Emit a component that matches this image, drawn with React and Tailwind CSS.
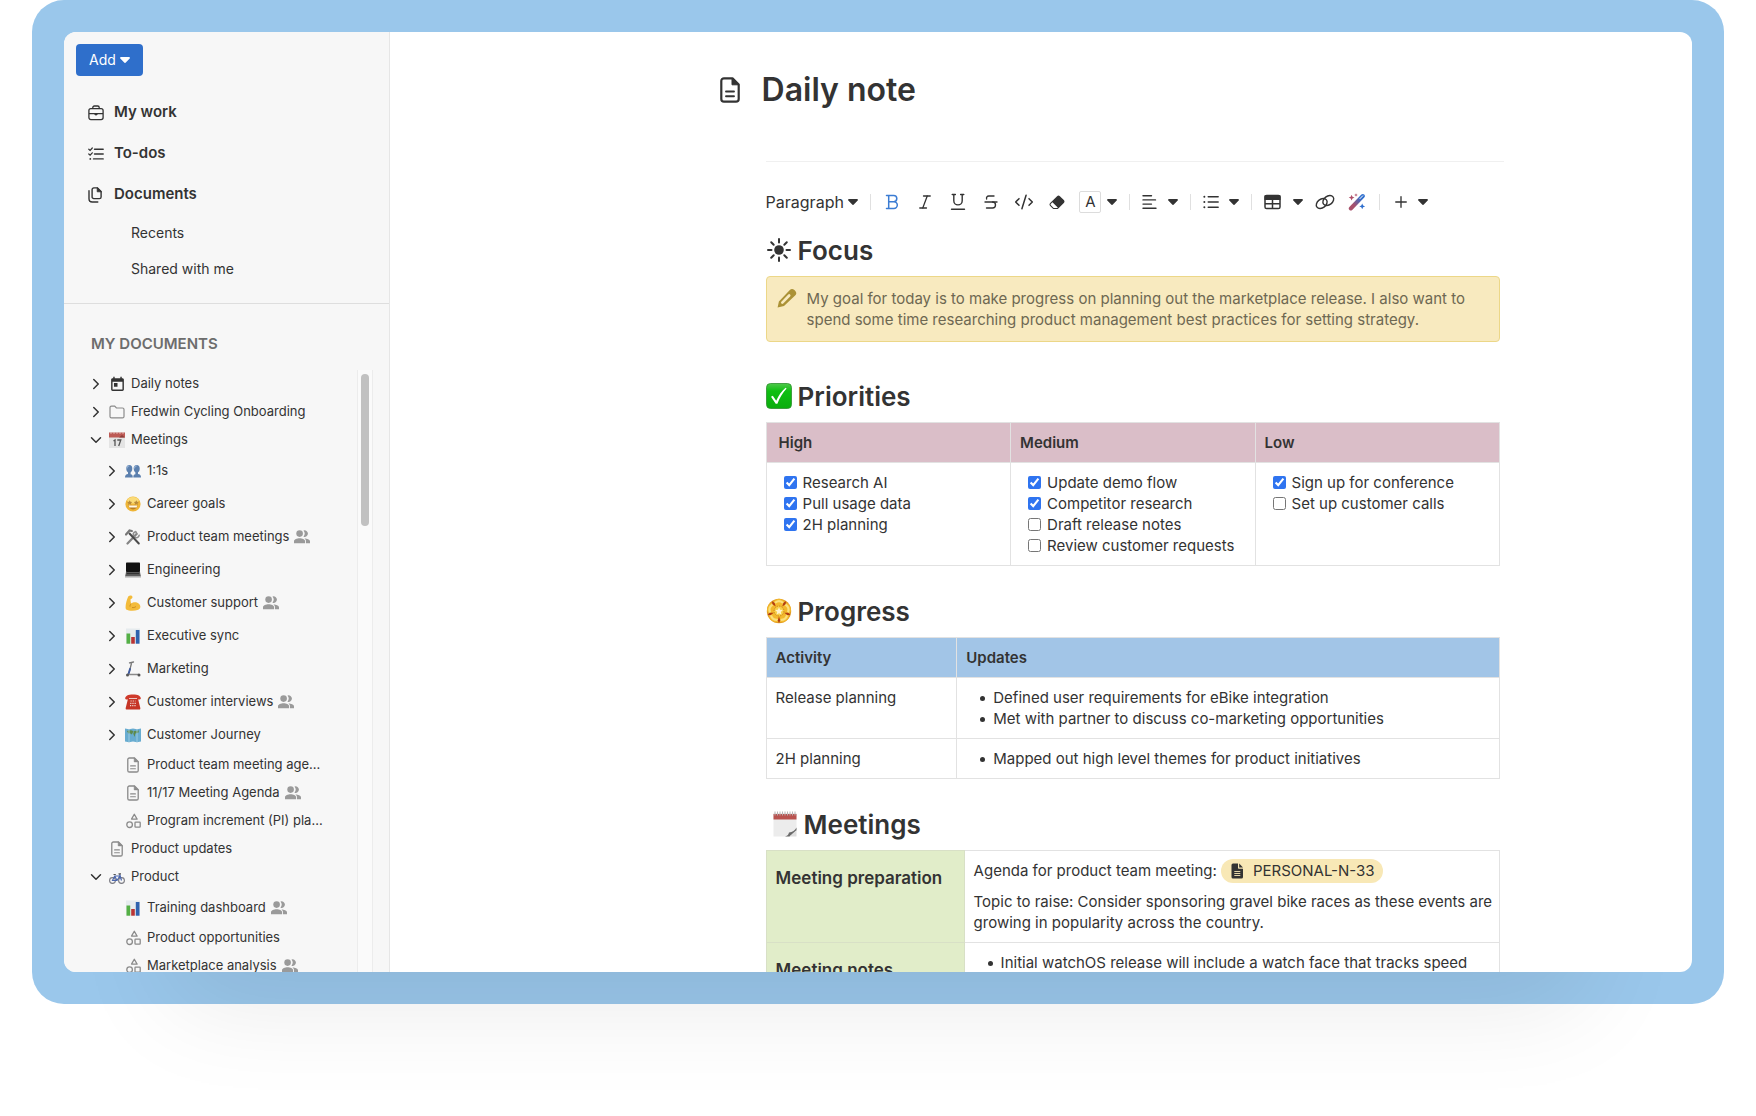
import { useId } from 'react'
import { ChevronDown, ChevronRight, CodeXml, Italic, Plus, Strikethrough } from 'lucide-react'
import { BsEraserFill } from 'react-icons/bs'
import { MdToday } from 'react-icons/md'

function Caret({ className = '' }) {
  return (
    <svg viewBox="0 0 10 6" className={`h-1.5 w-[10px] shrink-0 ${className}`} fill="currentColor" aria-hidden="true">
      <path d="M1 0h8a.9.9 0 0 1 .7 1.5L5.8 5.6a1.1 1.1 0 0 1-1.6 0L.3 1.500A.9.9 0 0 1 1 0z" />
    </svg>
  )
}

function BriefcaseIcon() {
  return (
    <svg viewBox="0 0 16 16" className="size-4" fill="none" stroke="currentColor" strokeWidth="1.3" aria-hidden="true">
      <rect x="0.9" y="3.600" width="14.200" height="11" rx="2" />
      <path d="M4.800 3.600V2.500A1.500 1.500 0 0 1 6.300 1h3.400a1.500 1.500 0 0 1 1.500 1.500v1.100M1 8.600h14" />
      <path d="M6.300 8.600h3.400v.4a1.700 1.400 0 0 1-3.400 0z" fill="currentColor" stroke="none" />
    </svg>
  )
}

function ChecklistIcon() {
  return (
    <svg viewBox="0 0 16 16" className="size-4" fill="none" stroke="currentColor" strokeWidth="1.4" strokeLinecap="round" aria-hidden="true">
      <path d="M6.500 3.200h8.700M6.500 8h8.700M5.500 12.900h9.700" />
      <path d="M.8 3.200l1.300 1.200L4.300 2M.8 8l1.300 1.200L4.300 6.800" strokeWidth="1.200" />
      <circle cx="2.300" cy="12.900" r="0.900" fill="currentColor" stroke="none" />
    </svg>
  )
}

function CopyIcon() {
  return (
    <svg viewBox="0 0 16 16" className="size-4" fill="none" stroke="currentColor" strokeWidth="1.400" strokeLinecap="round" aria-hidden="true">
      <path d="M9.500.9H5.800a1.700 1.700 0 0 0-1.700 1.700v7.300a1.700 1.700 0 0 0 1.700 1.700h5.600a1.700 1.700 0 0 0 1.700-1.700V4.500z" strokeLinejoin="round" />
      <path d="M9.200 1v3.800h3.900z" fill="currentColor" strokeWidth=".8" />
      <path d="M1 3.800v8a3.200 3.200 0 0 0 3.200 3.200h5.600" />
    </svg>
  )
}

function PageIcon({ className = '' }) {
  return (
    <svg viewBox="0 0 20 26" className={className} fill="none" stroke="currentColor" strokeWidth="2.200" strokeLinecap="round" aria-hidden="true">
      <path d="M12.500 1.300H4a2.700 2.700 0 0 0-2.700 2.700v18A2.700 2.700 0 0 0 4 24.700h12a2.700 2.700 0 0 0 2.700-2.700V7.500z" strokeLinejoin="round" />
      <path d="M12 1.500v6.300h6.600z" fill="currentColor" strokeWidth="1" />
      <path d="M6 14.500h8M6 19.200h8" strokeWidth="1.900" />
    </svg>
  )
}

function FolderIcon() {
  return (
    <svg viewBox="0 0 16 16" className="size-4 text-[#8b8b8b]" fill="none" stroke="currentColor" strokeWidth="1.200" aria-hidden="true">
      <path d="M1 3.600c0-.9.600-1.500 1.500-1.500h3.200l1.700 1.900h6.100c.9 0 1.500.6 1.500 1.500v6.900c0 .9-.6 1.500-1.500 1.500h-11c-.9 0-1.500-.6-1.500-1.500z" />
    </svg>
  )
}

function ShapesIcon() {
  return (
    <svg viewBox="0 0 16 16" className="size-4 text-[#8b8b8b]" fill="none" stroke="currentColor" strokeWidth="1.300" strokeLinejoin="round" aria-hidden="true">
      <path d="M9.300 1.200l2.800 4.900H6.500z" />
      <circle cx="4.600" cy="11.700" r="2.800" />
      <rect x="10" y="9.200" width="5.200" height="5" rx=".6" />
    </svg>
  )
}

function SharedIcon() {
  return (
    <svg viewBox="0 0 16 14" className="ml-[5px] h-[14px] w-4 shrink-0 text-[#9a9a9a]" fill="currentColor" role="img" aria-label="Shared">
      <circle cx="5.600" cy="3.600" r="3.300" />
      <path d="M9.500.5a3.300 3.300 0 1 1 0 6.200 5 5 0 0 0 0-6.200z" />
      <path d="M0 13.300v-2.100c0-2 3-3 5.600-3s5.500 1 5.500 3v2.100zM12 13.300v-2.100c0-1.200-.6-2-1.600-2.800 2.700.1 5.600 1 5.600 2.800v2.100z" />
    </svg>
  )
}

function BoldIcon() {
  return (
    <svg viewBox="0 0 14 16" className="h-4 w-[14px] text-[#3b7cd3]" fill="none" stroke="currentColor" strokeWidth="1.500" strokeLinecap="round" strokeLinejoin="round" aria-hidden="true">
      <path d="M1.500 1.500h7.200a3.100 3.100 0 0 1 0 6.200H3.700M8.900 7.700a3.400 3.400 0 0 1 0 6.800H1.500M3.700 1.500v13" />
    </svg>
  )
}

function UnderlineIcon() {
  return (
    <svg viewBox="0 0 16 18" className="h-[18px] w-4" fill="none" stroke="currentColor" strokeWidth="1.400" strokeLinecap="round" aria-hidden="true">
      <path d="M2.200 1.500h3.200M10.600 1.500h3.200M3.800 1.500v6.200a4.200 4.200 0 0 0 8.400 0V1.500M1.500 16.300h13" />
    </svg>
  )
}

function AlignIcon() {
  return (
    <svg viewBox="0 0 16 16" className="size-4" fill="none" stroke="currentColor" strokeWidth="1.400" strokeLinecap="round" aria-hidden="true">
      <path d="M1 1.700h8.500M1 5.900h12.500M1 10.100h8.500M1 14.300h13" />
    </svg>
  )
}

function ListIcon() {
  return (
    <svg viewBox="0 0 16 16" className="size-4" fill="none" stroke="currentColor" strokeWidth="1.400" strokeLinecap="round" aria-hidden="true">
      <path d="M5.200 2.700h10M5.200 8h10M5.200 13.300h10" />
      <path d="M1.300 2.700h.1M1.300 8h.1M1.300 13.300h.1" strokeWidth="1.900" />
    </svg>
  )
}

function TableIcon() {
  return (
    <svg viewBox="0 0 17 16" className="h-4 w-[17px]" fill="none" stroke="currentColor" strokeWidth="1.500" aria-hidden="true">
      <rect x="1" y="1.500" width="15" height="13" rx="1.600" />
      <path d="M1.200 2.200h14.600v3H1.200z" fill="currentColor" />
      <path d="M1 9.800h15M8.500 5v9.500" />
    </svg>
  )
}

function LinkIcon() {
  return (
    <svg viewBox="0 0 20 16" className="h-4 w-5" fill="none" stroke="currentColor" strokeWidth="1.400" aria-hidden="true">
      <ellipse cx="6.700" cy="9.500" rx="6" ry="4.300" transform="rotate(-38 6.700 9.500)" />
      <ellipse cx="13.300" cy="6.500" rx="6" ry="4.300" transform="rotate(-38 13.300 6.500)" />
    </svg>
  )
}

function WandIcon() {
  const id = useId()
  return (
    <svg viewBox="0 0 18 18" className="size-[18px]" aria-hidden="true">
      <defs>
        <linearGradient id={id} x1="0" y1="1" x2="1" y2="0">
          <stop offset="0.250" stopColor="#a8506b" />
          <stop offset="0.850" stopColor="#2f6fce" />
        </linearGradient>
      </defs>
      <path d="M2.800 15.500L14.800 3" stroke={`url(#${id})`} strokeWidth="4" strokeLinecap="round" />
      <path d="M12 5.600l2.700-2.800" stroke="#fff" strokeWidth="1" strokeLinecap="round" />
      <path d="M3.600 1.700l.9 2 2 .9-2 .9-.9 2-.9-2-2-.9 2-.9zM8 .2l.5 1.300 1.300.5-1.300.5L8 3.800l-.5-1.300L6.200 2l1.300-.5z" fill="#b0506a" />
      <path d="M14.200 10.500l.9 2 2 .9-2 .9-.9 2-.9-2-2-.9 2-.9z" fill="#2f6fce" />
    </svg>
  )
}

function SunIcon() {
  const rays = [0, 45, 90, 135, 180, 225, 270, 315]
  return (
    <svg viewBox="0 0 26 26" className="size-[26px]" fill="currentColor" aria-hidden="true">
      <circle cx="13" cy="13" r="4.800" />
      {rays.map((angle) => (
        <path key={angle} d="M13 5.500V2" stroke="currentColor" strokeWidth="2" strokeLinecap="round" transform={`rotate(${angle} 13 13)`} />
      ))}
    </svg>
  )
}

function PencilIcon() {
  return (
    <svg viewBox="0 0 20 20" className="size-5 shrink-0 text-[#ab9236]" aria-hidden="true">
      <path d="M.6 19.400l1.300-6L12.600 2.200a3.300 3.300 0 0 1 4.800-.1l.7.7a3.300 3.300 0 0 1 0 4.700L7 18.100z" fill="currentColor" />
      <path d="M5.300 14.600l6.900-7.100" stroke="#f8eabf" strokeWidth="2.600" strokeLinecap="round" />
    </svg>
  )
}

function CalendarEmoji() {
  return (
    <svg viewBox="0 0 16 16" className="size-4" aria-hidden="true">
      <rect x="0" y="0.500" width="16" height="15.500" fill="#e4e4e4" />
      <rect x="0" y="0.500" width="16" height="5" fill="#bd5a55" />
      <path d="M2 0v2M5 0v2M8 0v2M11 0v2M14 0v2" stroke="#e8c9c6" strokeWidth="0.800" />
      <path d="M10 5.500L13 3l3 2.500z" fill="#8d3f3b" />
      <path d="M4.500 9l1.500-1v6M8.300 8h3.500L9.700 14" fill="none" stroke="#555" strokeWidth="1.300" />
    </svg>
  )
}

function BustsEmoji() {
  return (
    <svg viewBox="0 0 16 16" className="size-4" aria-hidden="true">
      <g fill="#5c80ae">
        <ellipse cx="4.300" cy="5.800" rx="3" ry="3.700" />
        <ellipse cx="11.700" cy="5.800" rx="3" ry="3.700" />
        <path d="M3 9h2.600v2.200c1.500.3 2.200.9 2.200 3.300H0c0-2.400 1-3 3-3.400zM10.400 9H13v2.100c2 .4 3 1 3 3.400H8.300c0-2.400.6-3 2.100-3.300z" />
      </g>
      <path d="M2 5.500c0-1.800 1-2.700 2.300-2.700M9.400 5.500c0-1.800 1-2.700 2.300-2.700" stroke="#8eabcf" strokeWidth="1.200" fill="none" />
    </svg>
  )
}

function StarStruckEmoji() {
  return (
    <svg viewBox="0 0 16 16" className="size-4" aria-hidden="true">
      <circle cx="8" cy="8" r="7.600" fill="#efb537" />
      <ellipse cx="8" cy="4.300" rx="5.700" ry="3.300" fill="#fadb78" />
      <path d="M3.600 9.600h8.800c0 2.400-1.900 3.800-4.400 3.800s-4.400-1.400-4.400-3.800z" fill="#b97d25" />
      <path d="M3.800 9.500h8.400l-.5 2H4.300z" fill="#fff8e6" />
      <path d="M4.700 4.200l.8 1.500 1.700.3L6 7.200l.3 1.700-1.600-.8-1.600.8.3-1.700L2.200 6l1.700-.3zM11.300 4.200l.8 1.500 1.700.3-1.200 1.200.3 1.700-1.600-.8-1.600.8.300-1.700L8.800 6l1.700-.3z" fill="#b98a3a" />
    </svg>
  )
}

function ToolsEmoji() {
  return (
    <svg viewBox="0 0 16 16" className="size-4" fill="none" strokeLinecap="round" aria-hidden="true">
      <path d="M2.500 14.500L11.500 5" stroke="#858585" strokeWidth="2.200" />
      <path d="M10.500 2.800a3 3 0 1 0 3.700 3.400M10.800 2.500l1.200 2.300" stroke="#909090" strokeWidth="1.500" />
      <path d="M4.500 4.500l9.300 10" stroke="#4b4b4b" strokeWidth="2" />
      <path d="M1 5.500l3.500-4 2.300.5" stroke="#777" strokeWidth="2.200" />
    </svg>
  )
}

function LaptopEmoji() {
  return (
    <svg viewBox="0 0 16 16" className="size-4" aria-hidden="true">
      <rect x="1" y="0.500" width="14" height="9.500" rx="0.700" fill="#111" />
      <path d="M1 10h14l1 5H0z" fill="#5c5c5c" />
      <path d="M0 14.300h16V16H0z" fill="#cfcfcf" />
      <path d="M1.800 11.500h12.400" stroke="#333" strokeWidth="1.200" />
    </svg>
  )
}

function MuscleEmoji() {
  return (
    <svg viewBox="0 0 16 16" className="size-4" aria-hidden="true">
      <path d="M3.200 1.500C4.500.3 6.800.3 7.300 1.500c.5 1.100-.2 2.300-1.600 2.600-.3 1.800 0 3.200.6 4.600 1.500-1.700 5-2 7.300-.2 2.300 1.900 2.500 5-.3 6.200-3.800 1.500-9.300 1.400-12.100-.2C-.2 13.300.9 6.500 3.200 1.500z" fill="#f3bb3a" />
      <path d="M6.300 8.700c-.9.700-1.400 1.600-1.300 2.900M11 11.500c-1.200 1-2.500 1.300-4 1" stroke="#c98a1e" strokeWidth="0.900" fill="none" />
    </svg>
  )
}

function ChartEmoji() {
  return (
    <svg viewBox="0 0 16 16" className="size-4" aria-hidden="true">
      <rect x="1" y="0.500" width="14" height="15.200" fill="#e6ebee" />
      <rect x="1.500" y="5.500" width="3.700" height="10.200" fill="#54b045" />
      <rect x="6.200" y="9" width="3.600" height="6.700" fill="#b93434" />
      <rect x="10.800" y="2" width="3.700" height="13.700" fill="#2e62ae" />
    </svg>
  )
}

function ScooterEmoji() {
  return (
    <svg viewBox="0 0 16 16" className="size-4" fill="none" strokeLinecap="round" aria-hidden="true">
      <path d="M4.500 1.800L8.500 1M6.700 1.500L4 12" stroke="#777" strokeWidth="1.300" />
      <path d="M5 8L3.500 13" stroke="#3d5aa0" strokeWidth="1.900" />
      <path d="M3.500 13.500h10" stroke="#8a8a8a" strokeWidth="1.500" />
      <circle cx="2.500" cy="14" r="1.500" fill="#555" />
      <circle cx="14" cy="14" r="1.500" fill="#555" />
    </svg>
  )
}

function PhoneEmoji() {
  return (
    <svg viewBox="0 0 16 16" className="size-4" aria-hidden="true">
      <path d="M.2 4.800C0 1.800 3 .4 8 .4s8 1.400 7.800 4.400c0 1-3.600 1-3.800 0V4H4v.8c-.2 1-3.800 1-3.800 0z" fill="#cf3a2b" />
      <path d="M3 4.700h10L15.300 14c.2 1-.3 1.600-1.200 1.600H1.900c-.9 0-1.400-.6-1.200-1.600z" fill="#c63526" />
      <path d="M5.500 7h5M5.200 9.300h5.600M5 11.600h6" stroke="#f0d9d2" strokeWidth="1.200" strokeDasharray="1.200 1" />
    </svg>
  )
}

function MapEmoji() {
  return (
    <svg viewBox="0 0 16 16" className="size-4" aria-hidden="true">
      <path d="M0 1.500l4 .8 4-.8 4 .8 4-.8v13l-4 .8-4-.8-4 .8-4-.8z" fill="#68acd0" />
      <path d="M2 4c2-1 5-.8 6.500.2L6.800 7.500 5 6.300 3.300 6.500zM9 4l5-.5-.6 2.300-3 .6-.9 3.500-1.200-3.200z" fill="#5e8a4c" />
      <path d="M4 2.300v13M12 2.300v13" stroke="#a9d3e6" strokeWidth="0.800" />
    </svg>
  )
}

function BikeEmoji() {
  return (
    <svg viewBox="0 0 16 16" className="size-4" fill="none" aria-hidden="true">
      <circle cx="3.500" cy="11.500" r="2.900" stroke="#7b7b82" strokeWidth="1.100" />
      <circle cx="12.500" cy="11.500" r="2.900" stroke="#7b7b82" strokeWidth="1.100" />
      <path d="M3.500 11.500L5.700 7h5.200L8 11.500zM5.700 7L8 11.500M12.500 11.500L10.600 5" stroke="#4d68ae" strokeWidth="1.200" />
      <path d="M4.500 5.500h2.300M9.500 4.800h2.500" stroke="#555" strokeWidth="1.200" />
    </svg>
  )
}

function CheckEmoji() {
  const id = useId()
  return (
    <svg viewBox="0 0 26 26" className="size-[26px]" aria-hidden="true">
      <defs>
        <linearGradient id={id} x1="0" y1="0" x2="0" y2="1">
          <stop offset="0" stopColor="#4fc84b" />
          <stop offset="0.300" stopColor="#0fbf12" />
          <stop offset="1" stopColor="#0aad0d" />
        </linearGradient>
      </defs>
      <rect x="0.500" y="0.500" width="25" height="25" rx="4" fill={`url(#${id})`} stroke="#2c8f2c" strokeWidth="0.800" />
      <path d="M5 13.800l1.800-1 3.400 4.900C12.600 12.300 15.500 8 19.600 4.700l1 .8c-4.200 4.700-7 9.500-9.200 15.300H9.700z" fill="#fff" />
    </svg>
  )
}

function RosetteEmoji() {
  const petals = [0, 72, 144, 216, 288]
  return (
    <svg viewBox="0 0 26 26" className="size-[26px]" aria-hidden="true">
      <circle cx="13" cy="13" r="12.200" fill="#e09a22" />
      {petals.map((angle) => (
        <g key={angle} transform={`rotate(${angle} 13 13)`}>
          <ellipse cx="13" cy="6.200" rx="6.300" ry="5.400" fill="#f3b82c" />
          <path d="M9.300 4.600q3.700-2.800 7.400 0" stroke="#fbe07a" strokeWidth="2.200" fill="none" strokeLinecap="round" />
        </g>
      ))}
      {petals.map((angle) => (
        <path key={angle} d="M13 25l-1.300-2.600L13 18.500l1.300 3.900z" fill="#b03a12" transform={`rotate(${angle} 13 13)`} />
      ))}
      <circle cx="13" cy="13" r="4.900" fill="#f6cf48" stroke="#cf861c" strokeWidth="1" strokeDasharray="1.500 1" />
      <path d="M13 9.300l1.100 2.500 2.700.3-2 1.800.6 2.700-2.400-1.400-2.400 1.400.6-2.700-2-1.800 2.700-.3z" fill="#fff3cf" />
    </svg>
  )
}

function NotepadEmoji() {
  return (
    <svg viewBox="0 0 26 26" className="size-[26px]" aria-hidden="true">
      <path d="M1.500 2h23v17l-7 6.500h-16z" fill="#ececec" />
      <rect x="1.500" y="3" width="23" height="5.500" fill="#b9524f" />
      <path d="M3 .5v4M5.500.5v4M8 .5v4M10.500.5v4M13 .5v4M15.500.5v4M18 .5v4M20.500.5v4M23 .5v4" stroke="#b8b3b3" strokeWidth="1" />
      <path d="M24.500 16.500v3l-7 6h-4.500c3-1 3.500-2 4-4 3.500-.5 6-2 7.500-5z" fill="#6a6a6a" />
      <path d="M18.500 24.500l6-5.500v6.500h-7z" fill="#dedede" />
    </svg>
  )
}

const pageIcon = <PageIcon className="h-4 w-3 text-[#8b8b8b]" />

const tree = [
  { label: 'Daily notes', icon: <MdToday className="size-[17px] shrink-0" />, state: 'closed' },
  { label: 'Fredwin Cycling Onboarding', icon: <FolderIcon />, state: 'closed' },
  {
    label: 'Meetings',
    icon: <CalendarEmoji />,
    state: 'open',
    children: [
      { label: '1:1s', icon: <BustsEmoji />, state: 'closed', tall: true },
      { label: 'Career goals', icon: <StarStruckEmoji />, state: 'closed', tall: true },
      { label: 'Product team meetings', icon: <ToolsEmoji />, state: 'closed', tall: true, shared: true },
      { label: 'Engineering', icon: <LaptopEmoji />, state: 'closed', tall: true },
      { label: 'Customer support', icon: <MuscleEmoji />, state: 'closed', tall: true, shared: true },
      { label: 'Executive sync', icon: <ChartEmoji />, state: 'closed', tall: true },
      { label: 'Marketing', icon: <ScooterEmoji />, state: 'closed', tall: true },
      { label: 'Customer interviews', icon: <PhoneEmoji />, state: 'closed', tall: true, shared: true },
      { label: 'Customer Journey', icon: <MapEmoji />, state: 'closed', tall: true },
      { label: 'Product team meeting age...', icon: pageIcon },
      { label: '11/17 Meeting Agenda', icon: pageIcon, shared: true },
      { label: 'Program increment (PI) pla...', icon: <ShapesIcon /> },
    ],
  },
  { label: 'Product updates', icon: pageIcon },
  {
    label: 'Product',
    icon: <BikeEmoji />,
    state: 'open',
    children: [
      { label: 'Training dashboard', icon: <ChartEmoji />, tall: true, shared: true },
      { label: 'Product opportunities', icon: <ShapesIcon /> },
      { label: 'Marketplace analysis', icon: <ShapesIcon />, shared: true },
    ],
  },
]

const priorities = [
  {
    level: 'High',
    tasks: [
      { text: 'Research AI', done: true },
      { text: 'Pull usage data', done: true },
      { text: '2H planning', done: true },
    ],
  },
  {
    level: 'Medium',
    tasks: [
      { text: 'Update demo flow', done: true },
      { text: 'Competitor research', done: true },
      { text: 'Draft release notes', done: false },
      { text: 'Review customer requests', done: false },
    ],
  },
  {
    level: 'Low',
    tasks: [
      { text: 'Sign up for conference', done: true },
      { text: 'Set up customer calls', done: false },
    ],
  },
]

const progress = [
  {
    activity: 'Release planning',
    updates: ['Defined user requirements for eBike integration', 'Met with partner to discuss co-marketing opportunities'],
  },
  { activity: '2H planning', updates: ['Mapped out high level themes for product initiatives'] },
]

function TreeItem({ item, nested = false }) {
  const Chevron = item.state === 'open' ? ChevronDown : ChevronRight

  return (
    <li>
      <div className={`flex items-center ${item.tall ? 'h-[33px]' : 'h-7'} ${nested ? 'pl-10' : 'pl-6'}`}>
        <span className="flex w-4 shrink-0 justify-center">
          {item.state ? (
            <button type="button" aria-label={`Toggle ${item.label}`} aria-expanded={item.state === 'open'}>
              <Chevron className="size-[18px]" strokeWidth={2} />
            </button>
          ) : null}
        </span>
        <a href="#" className="ml-[5px] flex items-center whitespace-nowrap">
          <span className="mr-1.5 flex w-4 shrink-0 justify-center">{item.icon}</span>
          {item.label}
          {item.shared ? <SharedIcon /> : null}
        </a>
      </div>
      {item.children ? (
        <ul>
          {item.children.map((child) => <TreeItem key={child.label} item={child} nested />)}
        </ul>
      ) : null}
    </li>
  )
}

function NavLink({ icon, children }) {
  return (
    <a href="#" className="flex h-[41px] items-center gap-[10px] px-3 text-[15px] font-semibold">
      {icon}
      {children}
    </a>
  )
}

function Sidebar() {
  return (
    <aside className="flex w-[326px] shrink-0 flex-col border-r border-[#e6e6e6] bg-[#f7f7f7]">
      <div className="border-b border-[#dedede] px-3 pt-3 pb-4">
        <button type="button" className="flex h-8 items-center gap-1 rounded bg-[#2f6fcb] px-[13px] text-sm text-white">
          Add
          <Caret className="w-[9px]" />
        </button>
        <nav className="mt-4">
          <NavLink icon={<BriefcaseIcon />}>My work</NavLink>
          <NavLink icon={<ChecklistIcon />}>To-dos</NavLink>
          <NavLink icon={<CopyIcon />}>Documents</NavLink>
          <a href="#" className="flex h-9 items-center pl-[55px] text-sm">Recents</a>
          <a href="#" className="flex h-9 items-center pl-[55px] text-sm">Shared with me</a>
        </nav>
      </div>
      <h2 className="px-[27px] pt-[30px] pb-4 text-[15px] leading-5 font-semibold text-[#6d6d6d]">MY DOCUMENTS</h2>
      <div className="flex min-h-0 flex-1 pr-4">
        <ul className="min-w-0 flex-1 overflow-hidden text-[13px]">
          {tree.map((item) => <TreeItem key={item.label} item={item} />)}
        </ul>
        <div className="w-4 border-x border-[#ececec] bg-[#fafafa] px-[3px] pt-1">
          <div className="h-[152px] rounded-full bg-[#c1c1c1]" />
        </div>
      </div>
    </aside>
  )
}

function ToolButton({ label, className = 'w-[33px]', children }) {
  return (
    <button type="button" aria-label={label} className={`flex h-8 shrink-0 items-center justify-center ${className}`}>
      {children}
    </button>
  )
}

function Separator() {
  return <span className="mx-3 h-4 w-px shrink-0 bg-[#e0e0e0]" />
}

function Toolbar() {
  return (
    <div role="toolbar" className="mt-6 flex h-8 items-center">
      <button type="button" className="flex items-center gap-1 text-base">
        Paragraph
        <Caret />
      </button>
      <span className="mr-[5px] ml-3 h-4 w-px shrink-0 bg-[#e0e0e0]" />
      <ToolButton label="Bold"><BoldIcon /></ToolButton>
      <ToolButton label="Italic"><Italic className="size-[18px]" strokeWidth={1.7} /></ToolButton>
      <ToolButton label="Underline"><UnderlineIcon /></ToolButton>
      <ToolButton label="Strikethrough"><Strikethrough className="size-[18px]" strokeWidth={1.8} /></ToolButton>
      <ToolButton label="Code"><CodeXml className="size-5" strokeWidth={1.8} /></ToolButton>
      <ToolButton label="Clear formatting"><BsEraserFill className="size-4" /></ToolButton>
      <ToolButton label="Text color">
        <span className="flex size-[22px] items-center justify-center rounded-xs border border-[#dcdcdc] text-[15px]">A</span>
      </ToolButton>
      <ToolButton label="Text color options" className="w-[10px]"><Caret /></ToolButton>
      <Separator />
      <ToolButton label="Align" className="gap-[10px]"><AlignIcon /><Caret /></ToolButton>
      <Separator />
      <ToolButton label="List" className="gap-[10px]"><ListIcon /><Caret /></ToolButton>
      <Separator />
      <ToolButton label="Table" className="gap-3"><TableIcon /><Caret /></ToolButton>
      <ToolButton label="Link" className="ml-3 w-5"><LinkIcon /></ToolButton>
      <ToolButton label="Assistant" className="ml-3 w-5"><WandIcon /></ToolButton>
      <Separator />
      <ToolButton label="Insert" className="gap-2"><Plus className="size-[18px]" strokeWidth={1.8} /><Caret /></ToolButton>
    </div>
  )
}

function Heading({ icon, children }) {
  return (
    <h2 className="mb-[10px] flex h-8 items-center gap-1.5 text-[26px] font-semibold">
      {icon}
      {children}
    </h2>
  )
}

function BulletList({ items }) {
  return (
    <ul className="pl-[14px]">
      {items.map((item) => (
        <li key={item} className="flex gap-2">
          <span className="mt-[9px] size-[5px] shrink-0 rounded-full bg-current" />
          {item}
        </li>
      ))}
    </ul>
  )
}

const tableClass = 'w-full table-fixed border-collapse border border-[#e2e2e2] text-left leading-[21px]'
const cellClass = 'border border-[#e2e2e2] py-[9px] pr-1 pl-[9px] align-top'

function PrioritiesTable() {
  return (
    <table className={tableClass}>
      <thead>
        <tr className="bg-[#dabec8]">
          {priorities.map((column) => (
            <th key={column.level} className="border border-[#e2e2e2] p-[9px] font-semibold first:pl-3">{column.level}</th>
          ))}
        </tr>
      </thead>
      <tbody>
        <tr>
          {priorities.map((column) => (
            <td key={column.level} className={cellClass}>
              <ul className="pl-2">
                {column.tasks.map((task) => (
                  <li key={task.text}>
                    <label className="flex items-center gap-1.5">
                      <input type="checkbox" defaultChecked={task.done} className="size-[13px] accent-[#2f74f0]" />
                      {task.text}
                    </label>
                  </li>
                ))}
              </ul>
            </td>
          ))}
        </tr>
      </tbody>
    </table>
  )
}

function ProgressTable() {
  return (
    <table className={tableClass}>
      <thead>
        <tr className="bg-[#a2c5e7]">
          <th className={`w-[26%] font-semibold ${cellClass}`}>Activity</th>
          <th className={`font-semibold ${cellClass}`}>Updates</th>
        </tr>
      </thead>
      <tbody>
        {progress.map((row) => (
          <tr key={row.activity}>
            <td className={cellClass}>{row.activity}</td>
            <td className={cellClass}>
              <BulletList items={row.updates} />
            </td>
          </tr>
        ))}
      </tbody>
    </table>
  )
}

function MeetingsTable() {
  const rowHeadClass = 'w-[27%] border border-[#d8e0c6] bg-[#e1edc9] pt-4 pl-[9px] align-top text-[17px] leading-[22px] font-semibold'

  return (
    <table className={tableClass}>
      <tbody>
        <tr>
          <th scope="row" className={rowHeadClass}>Meeting preparation</th>
          <td className={cellClass}>
            <p className="mb-[10px] flex h-[21px] items-center gap-1">
              Agenda for product team meeting:
              <a href="#" className="flex h-6 items-center gap-2 rounded-full bg-[#f8e8b6] px-2">
                <svg viewBox="0 0 16 16" className="size-4" fill="currentColor" aria-hidden="true">
                  <path d="M4 .5h5v4.200c0 .6.400 1 1 1h4V14a1.500 1.500 0 0 1-1.500 1.500H4A1.500 1.500 0 0 1 2.500 14V2A1.500 1.500 0 0 1 4 .5z" />
                  <path d="M10.200.6L14 4.500h-3.800z" />
                  <path d="M5.300 8.500h6M5.300 10.500h6M5.300 12.500h6" stroke="#f8e8b6" strokeWidth="0.900" />
                </svg>
                PERSONAL-N-33
              </a>
            </p>
            <p>Topic to raise: Consider sponsoring gravel bike races as these events are growing in popularity across the country.</p>
          </td>
        </tr>
        <tr>
          <th scope="row" className={rowHeadClass}>Meeting notes</th>
          <td className={cellClass}>
            <BulletList items={['Initial watchOS release will include a watch face that tracks speed']} />
          </td>
        </tr>
      </tbody>
    </table>
  )
}

export default function App() {
  return (
    <div className="h-screen overflow-hidden bg-white px-8 pb-28 font-['Inter',sans-serif] text-[#333]">
      <div className="h-full rounded-[32px] bg-[#9ac7eb] p-8">
        <div className="flex h-full overflow-hidden rounded-xl bg-white shadow-[0_140px_100px_-110px_rgba(0,0,0,0.09)]">
          <Sidebar />
          <main className="min-w-0 flex-1 overflow-hidden pt-[38px] pr-48 pl-[20%] text-[15px]">
            <div className="flex items-center gap-[22px]">
              <PageIcon className="ml-1 h-[26px] w-5 shrink-0" />
              <h1 className="text-[32px] leading-10 font-semibold">Daily note</h1>
            </div>
            <div className="pl-[50px]">
              <hr className="mt-[51px] -mr-1 border-[#f0f0f0]" />
              <Toolbar />

              <section className="mt-4 mb-[38px]">
                <Heading icon={<SunIcon />}>Focus</Heading>
                <div className="flex gap-[10px] rounded border border-[#ecd788] bg-[#f8eabf] px-[10px] py-[11px] leading-[21px] text-[#6e6852]">
                  <PencilIcon />
                  <p>My goal for today is to make progress on planning out the marketplace release. I also want to spend some time researching product management best practices for setting strategy.</p>
                </div>
              </section>

              <section className="mb-[29px]">
                <Heading icon={<CheckEmoji />}>Priorities</Heading>
                <PrioritiesTable />
              </section>

              <section className="mb-[29px]">
                <Heading icon={<RosetteEmoji />}>Progress</Heading>
                <ProgressTable />
              </section>

              <section>
                <Heading icon={<span className="pl-1.5"><NotepadEmoji /></span>}>Meetings</Heading>
                <MeetingsTable />
              </section>
            </div>
          </main>
        </div>
      </div>
    </div>
  )
}
